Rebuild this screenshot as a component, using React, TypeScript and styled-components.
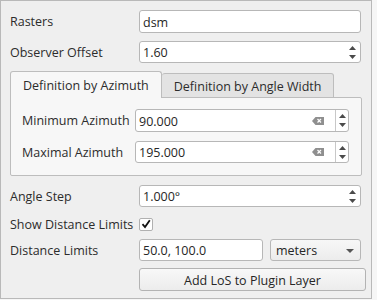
import React from "react";
import styled, { createGlobalStyle } from "styled-components";

const GlobalStyle = createGlobalStyle`
  html, body {
    margin: 0;
    padding: 0;
    background: #f6f6f6;
  }

  body {
    font-family: "Open Sans", "Noto Sans", sans-serif;
    font-size: 12.5px;
    color: #2c2c2c;
  }
`;

const Frame = styled.div`
  box-sizing: border-box;
  width: 372px;
  height: 299px;
  padding: 9px 10px 0 9px;

  display: flex;
  flex-direction: column;

  background: #efefef;
  border: 1px solid #b9b9b9;
`;

const Row = styled.div<{ $top?: number; $h?: number; $labelW?: number }>`
  display: grid;
  grid-template-columns: ${({ $labelW }) => $labelW ?? 129}px 1fr;
  align-items: center;

  height: ${({ $h }) => $h ?? 22}px;
  margin-top: ${({ $top }) => $top ?? 0}px;
`;

const Label = styled.span`
  padding-top: 2px;
  white-space: nowrap;
  line-height: 1;
`;

const Field = styled.div`
  box-sizing: border-box;
  height: 100%;
  display: flex;
  align-items: center;

  background: #ffffff;
  border: 1px solid #b7b7b7;
  border-radius: 3px;
`;

const FieldText = styled.span`
  flex: 1;
  padding: 1px 0 0 3px;
  color: #262626;
`;

const Spinner = styled.div<{ $split?: boolean }>`
  box-sizing: border-box;
  width: 13px;
  height: 100%;
  display: flex;
  flex-direction: column;
  align-items: center;
  justify-content: center;
  gap: 5px;

  border-left: ${({ $split }) => ($split ? "1px solid #c8c8c8" : "none")};
  margin-right: ${({ $split }) => ($split ? 0 : 1)}px;
`;

const ClearIcon = styled.svg`
  margin-right: 11px;
`;

const Tabs = styled.div`
  margin-top: 8px;
  display: flex;
  flex-direction: column;
  width: 352px;
`;

const TabBar = styled.div`
  display: flex;
  align-items: flex-end;
  height: 27px;
  margin-bottom: -1px;
`;

const Tab = styled.div<{ $active?: boolean }>`
  box-sizing: border-box;
  height: ${({ $active }) => ($active ? 27 : 25)}px;
  padding: 1px 12px 0 12px;
  display: flex;
  align-items: center;

  background: ${({ $active }) => ($active ? "#f7f7f7" : "#e3e3e3")};
  border: 1px solid #bdbdbd;
  border-bottom: ${({ $active }) => ($active ? "none" : "1px solid #bdbdbd")};
  border-left: ${({ $active }) => ($active ? "1px solid #bdbdbd" : "none")};
  border-radius: 3px 3px 0 0;
  position: relative;
  z-index: ${({ $active }) => ($active ? 1 : 0)};
  white-space: nowrap;
`;

const Pane = styled.div`
  box-sizing: border-box;
  height: 79px;
  padding: 11px 12px 0 11px;
  display: flex;
  flex-direction: column;

  background: #f7f7f7;
  border: 1px solid #bdbdbd;
  border-radius: 0 2px 2px 2px;
`;

const CheckBox = styled.div`
  box-sizing: border-box;
  width: 14px;
  height: 13px;
  display: flex;
  align-items: center;
  justify-content: center;

  background: #ffffff;
  border: 1px solid #b0b0b0;
  border-radius: 2px;
`;

const DistanceFields = styled.div`
  display: grid;
  grid-template-columns: 124px 1fr;
  gap: 7px;
  height: 100%;
`;

const Combo = styled.div`
  box-sizing: border-box;
  height: 100%;
  display: flex;
  align-items: center;
  justify-content: space-between;
  padding: 1px 6px 0 5px;

  background: linear-gradient(#f7f7f7, #ececec);
  border: 1px solid #b7b7b7;
  border-radius: 3px;
  color: #262626;
`;

const Button = styled.div`
  box-sizing: border-box;
  height: 100%;
  margin-right: -5px;
  padding-top: 1px;
  display: flex;
  align-items: center;
  justify-content: center;

  background: linear-gradient(#f8f8f8, #ececec);
  border: 1px solid #b3b3b3;
  border-radius: 3px;
  color: #262626;
`;

const Arrows = () => (
  <>
    <svg width="7" height="4" viewBox="0 0 7 4">
      <path d="M0 4 L3.5 0 L7 4 Z" fill="#4a4a4a" />
    </svg>
    <svg width="7" height="4" viewBox="0 0 7 4">
      <path d="M0 0 L7 0 L3.5 4 Z" fill="#4a4a4a" />
    </svg>
  </>
);

const SpinField = ({ value, clear }: { value: string; clear?: boolean }) => (
  <Field>
    <FieldText>{value}</FieldText>
    {clear && (
      <ClearIcon width="12" height="8" viewBox="0 0 12 8">
        <path d="M0 4 L3.5 0 H12 V8 H3.5 Z" fill="#8f8f8f" />
        <path d="M5.5 2 L9 5.5 M9 2 L5.5 5.5" stroke="#ffffff" strokeWidth="1.2" />
      </ClearIcon>
    )}
    <Spinner $split={clear}>
      <Arrows />
    </Spinner>
  </Field>
);

const App = () => {
  return (
    <>
      <GlobalStyle />
      <Frame>
        <Row $h={23}>
          <Label>Rasters</Label>
          <Field>
            <FieldText>dsm</FieldText>
          </Field>
        </Row>

        <Row $top={8}>
          <Label>Observer Offset</Label>
          <SpinField value="1.60" />
        </Row>

        <Tabs>
          <TabBar>
            <Tab $active>Definition by Azimuth</Tab>
            <Tab>Definition by Angle Width</Tab>
          </TabBar>
          <Pane>
            <Row $h={23} $labelW={113}>
              <Label>Minimum Azimuth</Label>
              <SpinField value="90.000" clear />
            </Row>
            <Row $top={9} $labelW={113}>
              <Label>Maximal Azimuth</Label>
              <SpinField value="195.000" clear />
            </Row>
          </Pane>
        </Tabs>

        <Row $top={9}>
          <Label>Angle Step</Label>
          <SpinField value="1.000°" />
        </Row>

        <Row $top={10} $h={13}>
          <Label>Show Distance Limits</Label>
          <CheckBox>
            <svg width="10" height="10" viewBox="0 0 10 10">
              <path d="M1.5 5.2 L4 8 L8.8 1.2" stroke="#111" strokeWidth="1.8" fill="none" />
            </svg>
          </CheckBox>
        </Row>

        <Row $top={9}>
          <Label>Distance Limits</Label>
          <DistanceFields>
            <Field>
              <FieldText>50.0, 100.0</FieldText>
            </Field>
            <Combo>
              <span>meters</span>
              <svg width="8" height="4" viewBox="0 0 8 4">
                <path d="M0 0 L8 0 L4 4 Z" fill="#555" />
              </svg>
            </Combo>
          </DistanceFields>
        </Row>

        <Row $top={7} $h={23}>
          <span />
          <Button>Add LoS to Plugin Layer</Button>
        </Row>
      </Frame>
    </>
  );
};

export default App;
